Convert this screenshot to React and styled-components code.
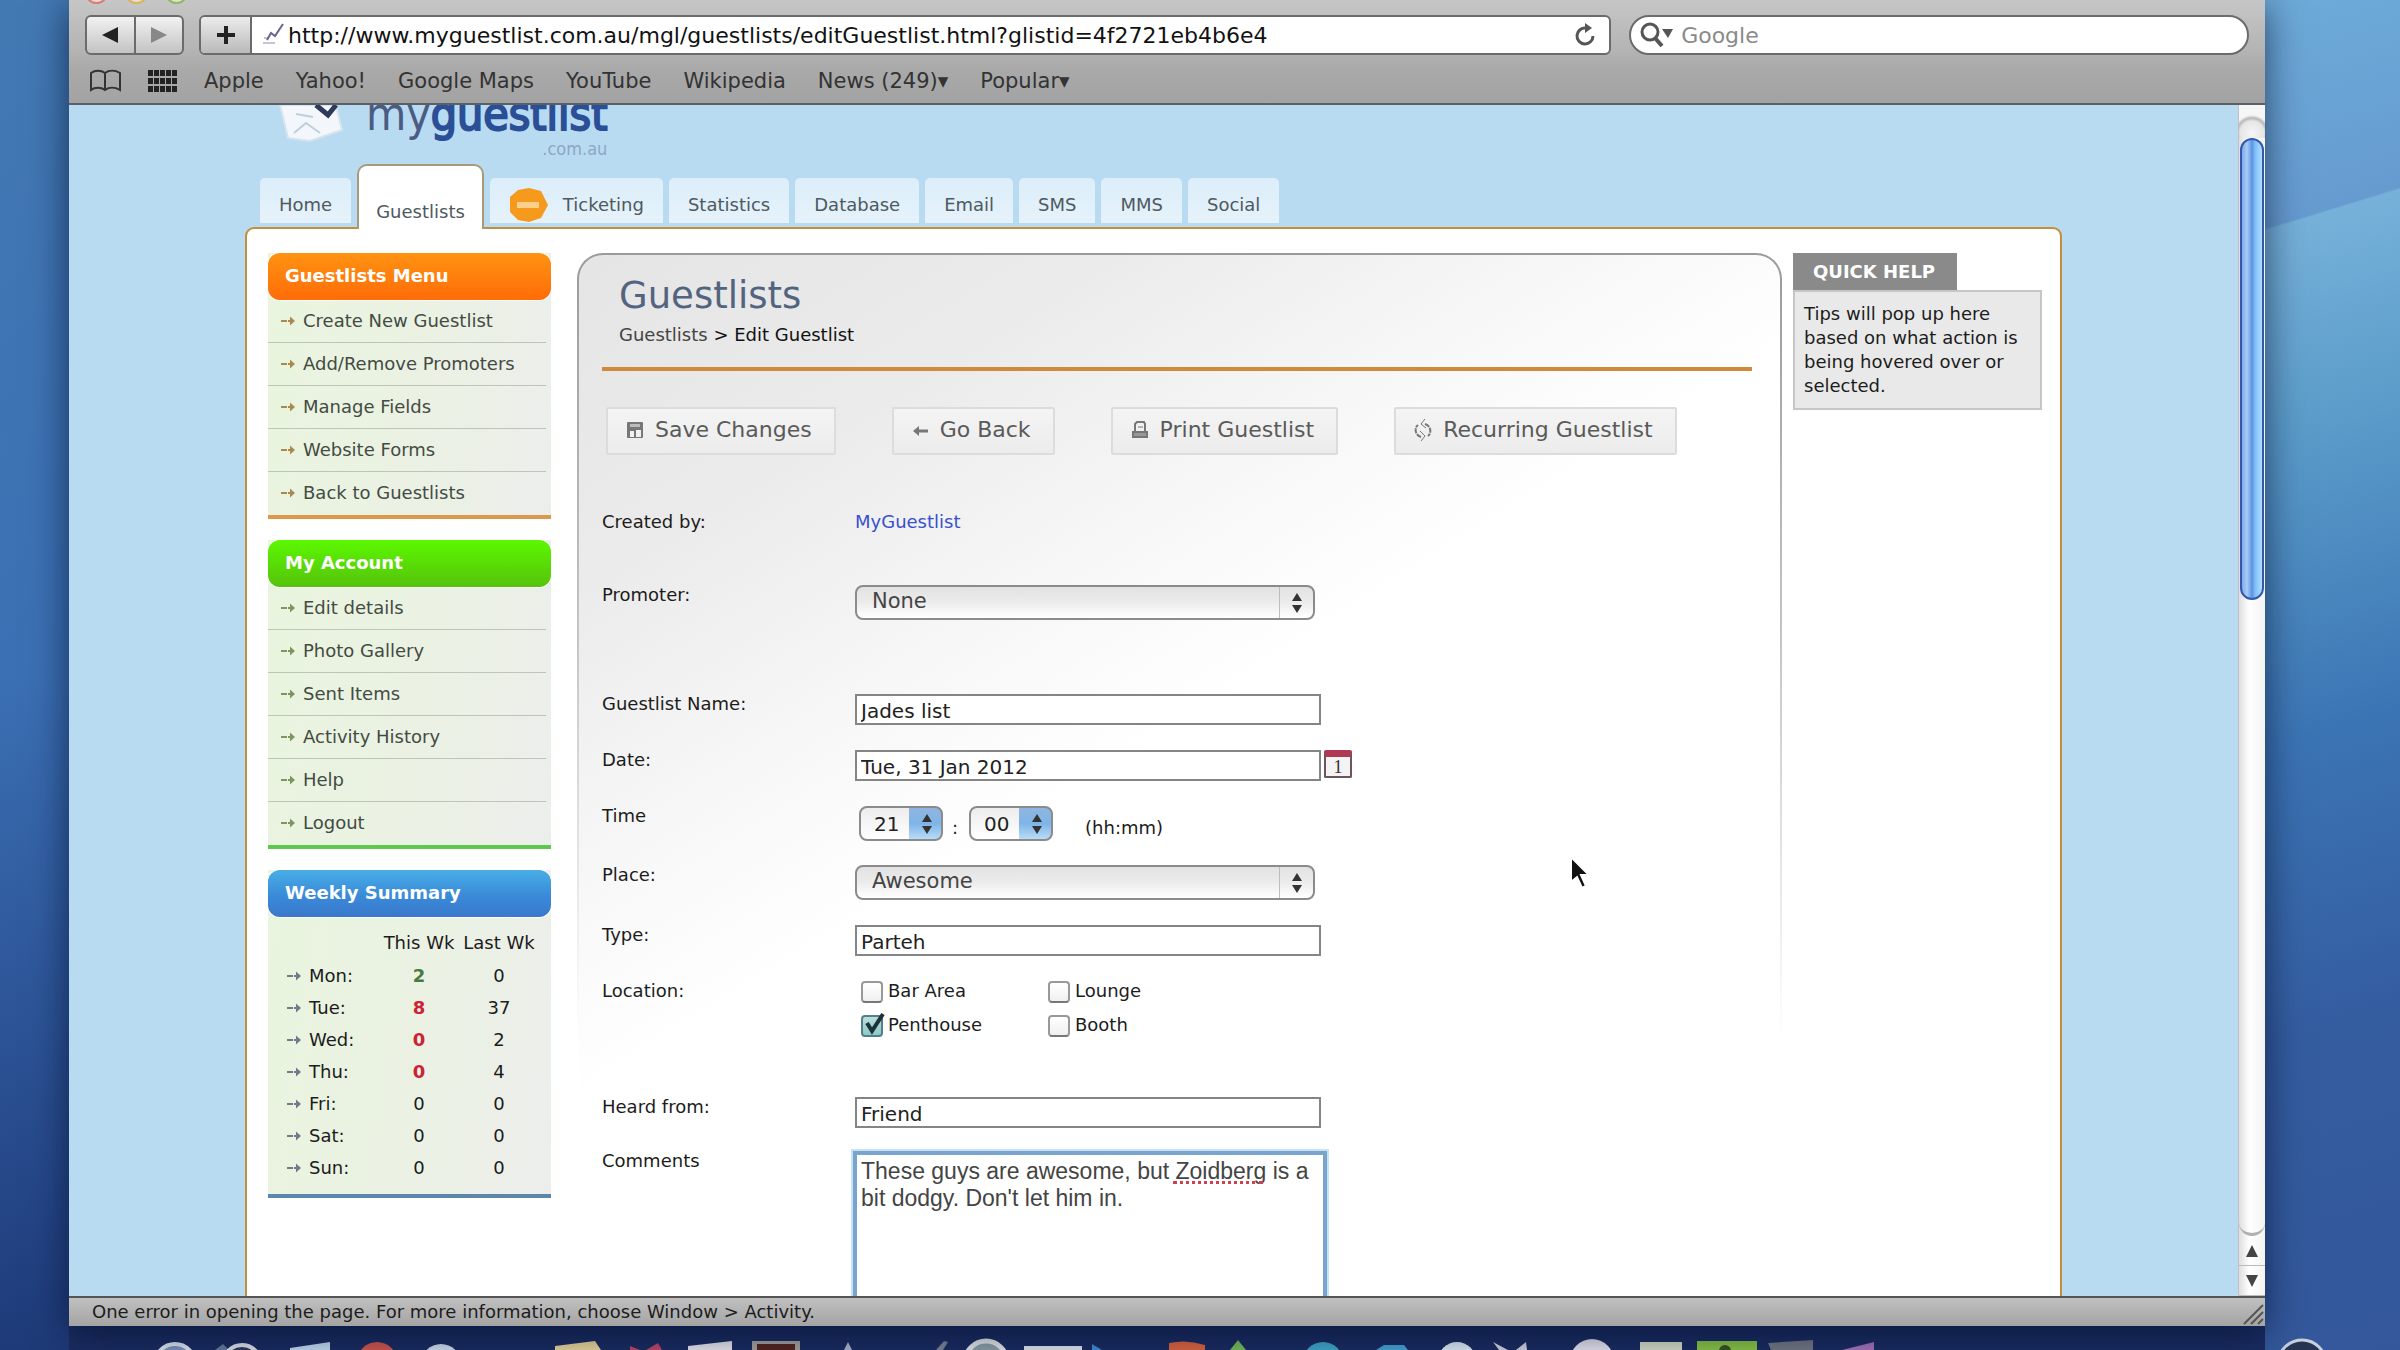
import React from "react";
import styled, { createGlobalStyle } from "styled-components";

const GlobalStyle = createGlobalStyle`
  * {
    box-sizing: border-box;
  }

  body {
    margin: 0;
    overflow: hidden;
    font-family: "DejaVu Sans", Verdana, sans-serif;
    font-size: 18px;
    line-height: 20px;
    color: #1c1c1c;
  }

  button, input, select, textarea {
    font-family: inherit;
    margin: 0;
  }

  a {
    color: inherit;
    text-decoration: none;
  }
`;

const Desktop = styled.div`
  position: relative;
  height: 100vh;
  padding: 0 135px 24px 69px;
  overflow: hidden;
  background:
    linear-gradient(163deg, #6dabd9 0, #669bd0 220px, #76b1d9 222px, #5b9cca 420px, #3b74b4 720px, #345da0 1000px, #33579a 100%)
      right top / 140px 100% no-repeat,
    linear-gradient(180deg, #4379b3 0, #3b70b4 50%, #274a8c 85%, #1e3a78 100%);
`;

const Browser = styled.div`
  display: flex;
  flex-direction: column;
  position: relative;
  z-index: 1;
  height: 100%;
  background: #b8dbf2;
  box-shadow: 0 6px 36px rgba(0, 10, 40, 0.65);
`;

const Chrome = styled.header`
  background: linear-gradient(180deg, #c6c6c6 0, #b4b4b4 50px, #a9a9a9 70px, #a3a3a3 100%);
  border-bottom: 2px solid #5b6067;
`;

const Lights = styled.div`
  display: flex;
  gap: 17px;
  height: 15px;
  padding-left: 16px;
  overflow: hidden;
`;

const Light = styled.span`
  width: 23px;
  height: 23px;
  margin-top: -19px;
  border-radius: 50%;
  border: 2px solid ${({ $color }) => $color};
  background: #e6dcd2;
`;

const Toolbar = styled.div`
  display: flex;
  height: 40px;
  padding: 0 16px;
`;

const NavButtons = styled.div`
  display: flex;
  width: 99px;
  margin-right: 15px;
  border: 2px solid #6b6b6b;
  border-radius: 6px;
  background: linear-gradient(180deg, #f2f2f2, #c3c3c3);
`;

const ToolButton = styled.button`
  flex: 1;
  display: flex;
  align-items: center;
  justify-content: center;
  padding: 0;
  border: 0;
  background: none;

  & + & {
    border-left: 2px solid #6b6b6b;
  }
`;

const AddressBar = styled.div`
  flex: 19;
  display: flex;
  align-items: center;
  margin-right: 18px;
  padding-right: 12px;
  border: 2px solid #6b6b6b;
  border-radius: 6px;
  background: #fff;
  overflow: hidden;
`;

const AddButton = styled.button`
  width: 51px;
  align-self: stretch;
  display: flex;
  align-items: center;
  justify-content: center;
  padding: 0;
  border: 0;
  border-right: 2px solid #6b6b6b;
  background: linear-gradient(180deg, #ececec, #b9b9b9);
`;

const IconButton = styled.button`
  display: flex;
  padding: 0;
  border: 0;
  background: none;
`;

const BarInput = styled.input`
  flex: 1;
  min-width: 0;
  padding: 0;
  border: 0;
  outline: 0;
  background: none;
  font-size: 22px;
  color: #111;

  &::placeholder {
    color: #8a8a8a;
    opacity: 1;
  }
`;

const Favicon = styled.svg`
  margin: 0 2px 0 8px;
`;

const SearchBar = styled.label`
  flex: 8;
  display: flex;
  align-items: center;
  gap: 8px;
  padding: 0 20px 0 8px;
  border: 2px solid #6b6b6b;
  border-radius: 20px;
  background: #fff;
`;

const Bookmarks = styled.nav`
  display: flex;
  align-items: center;
  height: 48px;
  padding: 4px 0 0 20px;
  font-size: 21px;
  line-height: 24px;
  color: #333;
`;

const BookmarkIcon = styled.button`
  display: flex;
  padding: 0;
  margin-right: 26px;
  border: 0;
  background: none;
`;

const Bookmark = styled.a`
  margin-right: 32px;
`;

const Viewport = styled.div`
  flex: 1;
  min-height: 0;
  display: flex;
`;

const Page = styled.div`
  flex: 1;
  overflow: hidden;
  display: flex;
  flex-direction: column;
  align-items: center;
  background: #b8dbf2;
`;

const PageInner = styled.div`
  flex: 1;
  display: flex;
  flex-direction: column;
  width: calc(100% - 352px);
`;

const Brand = styled.div`
  display: flex;
  height: 60px;
  padding-left: 31px;
`;

const BrandMark = styled.svg`
  margin-right: 16px;
`;

const BrandName = styled.div`
  display: flex;
  flex-direction: column;
  align-items: flex-end;
  margin-top: -18px;
  font-family: "DejaVu Sans Condensed", "DejaVu Sans", sans-serif;
  font-size: 46px;
  line-height: 54px;
  color: #4b5b82;

  b {
    font-weight: 400;
    -webkit-text-stroke: 2px #2a4f96;
    color: #2a4f96;
  }

  small {
    font-size: 18px;
    line-height: 16px;
    color: #8ea6c4;
  }
`;

const Tabs = styled.nav`
  display: flex;
  align-items: flex-end;
  gap: 6px;
  height: 62px;
  padding-left: 15px;
`;

const Tab = styled.a`
  display: flex;
  align-items: center;
  justify-content: center;
  gap: 14px;
  height: 45px;
  margin-bottom: 4px;
  padding: 8px 19px 0;
  border-radius: 5px 5px 0 0;
  background: linear-gradient(180deg, #dbeefa, #e6f2fa);
  color: #4f5960;
`;

const ActiveTab = styled(Tab)`
  position: relative;
  z-index: 1;
  height: 65px;
  margin-bottom: -2px;
  padding: 28px 17px 0;
  border: 2px solid #a89a78;
  border-bottom: 0;
  border-radius: 10px 10px 0 0;
  background: #fff;
`;

const Sheet = styled.div`
  flex: 1;
  display: flex;
  align-items: flex-start;
  padding: 24px 18px 0 21px;
  border: 2px solid #c48e3c;
  border-bottom: 0;
  border-radius: 9px 9px 0 0;
  background: #fff;
`;

const Sidebar = styled.aside`
  display: flex;
  flex-direction: column;
  gap: 21px;
  width: 283px;
  margin-right: 26px;
`;

const Box = styled.section`
  border-bottom: 4px solid ${({ $line }) => $line};
  background: linear-gradient(100deg, #e9f5de, #ebf1e4 60%, #eceeec);
`;

const BoxTitle = styled.h2`
  height: 47px;
  margin: 0;
  padding: 0 17px;
  border-radius: 12px;
  background: ${({ $fill }) => $fill};
  box-shadow: 0 0 0 1px #fff;
  font-size: 18px;
  font-weight: 700;
  line-height: 46px;
  color: #fff;
`;

const MenuItem = styled.a`
  display: flex;
  align-items: center;
  gap: 7px;
  height: 43px;
  margin-right: 5px;
  padding-left: 12px;
  border-bottom: 1px solid #bcc6b8;
  color: #434b43;

  &:last-child {
    border-bottom-color: transparent;
  }
`;

const Summary = styled.table`
  width: calc(100% - 12px);
  border-collapse: collapse;
  table-layout: fixed;
  margin: 9px 0 10px;

  th, td {
    height: 32px;
    padding: 0;
    text-align: center;
    white-space: nowrap;
  }

  th {
    font-weight: 400;
  }

  thead th {
    height: 34px;
  }
`;

const DayCell = styled.th`
  width: 111px;

  span {
    display: flex;
    align-items: center;
    gap: 7px;
    padding-left: 18px;
  }
`;

const CountCell = styled.td`
  font-weight: ${({ $tone }) => ($tone ? 700 : 400)};
  color: ${({ $tone }) => $tone || "#1c1c1c"};
`;

const Panel = styled.main`
  flex: 1;
  min-width: 0;
  padding: 20px 28px 0 23px;
  border: 2px solid transparent;
  border-bottom: 0;
  border-radius: 26px 26px 0 0;
  background:
    linear-gradient(148deg, #e5e5e5 0, #ebebeb 18%, #f8f8f8 35%, #fff 46%) padding-box,
    linear-gradient(180deg, #9a9a9a 0, #c4c4c4 380px, #fff 790px) border-box;
`;

const PageHead = styled.div`
  padding: 0 17px 22px;
  border-bottom: 4px solid #d08a3c;
`;

const Title = styled.h1`
  margin: 0 0 8px;
  font-size: 37px;
  font-weight: 400;
  line-height: 42px;
  color: #52647f;
`;

const Crumbs = styled.div`
  color: #111;

  a {
    color: #444;
  }
`;

const Actions = styled.div`
  display: flex;
  gap: 56px;
  padding: 36px 0 57px 4px;
`;

const Action = styled.button`
  display: flex;
  align-items: center;
  gap: 11px;
  height: 48px;
  padding: 0 22px 3px 18px;
  border: 2px solid #dcdcdc;
  border-radius: 2px;
  background: linear-gradient(180deg, #f4f4f4, #ececec);
  font-size: 22px;
  white-space: nowrap;
  color: #5a5a5a;
`;

const Field = styled.div`
  display: grid;
  grid-template-columns: 253px 1fr;
  align-items: start;
  height: ${({ $height }) => $height}px;
`;

const Controls = styled.div`
  display: flex;
  align-items: flex-start;
`;

const Account = styled.a`
  color: #3a50cc;
`;

const TextBox = styled.input`
  width: 466px;
  height: 31px;
  padding: 2px 4px 0;
  border: 2px solid #858585;
  border-radius: 0;
  background: #fff;
  font-size: 20px;
  color: #222;
`;

const SelectWrap = styled.div`
  position: relative;
  width: 460px;

  svg {
    position: absolute;
    top: 7px;
    right: 12px;
    pointer-events: none;
  }
`;

const WideSelect = styled.select`
  appearance: none;
  width: 100%;
  height: 35px;
  padding: 0 0 3px 15px;
  border: 2px solid #8b8b8b;
  border-radius: 8px;
  background:
    linear-gradient(#bdbdbd, #bdbdbd) right 33px top / 1px 100% no-repeat,
    linear-gradient(180deg, #e2e2e2, #ececec 50%, #fff);
  font-size: 21px;
  color: #444;
`;

const TimeWrap = styled(SelectWrap)`
  width: 84px;
  margin-left: ${({ $gap }) => $gap}px;

  svg {
    right: 10px;
  }
`;

const TimeSelect = styled(WideSelect)`
  padding: 0 0 0 13px;
  background:
    linear-gradient(180deg, #8fb6e0, #7fb4e8 50%, #b8dcf8) right top / 32px 100% no-repeat,
    linear-gradient(180deg, #ededed, #fff);
  font-size: 20px;
  color: #222;
`;

const Colon = styled.span`
  padding: 12px 0 0 9px;
`;

const Hint = styled.span`
  padding: 12px 0 0 32px;
`;

const DateButton = styled.button`
  width: 28px;
  height: 28px;
  margin-left: 3px;
  padding: 0;
  border: 2px solid #6d5560;
  border-top: 7px solid #b03a54;
  border-radius: 2px;
  background: #f4f4f4;
  font-family: "Liberation Serif", serif;
  font-size: 18px;
  line-height: 18px;
  color: #333;
`;

const Choices = styled.div`
  display: grid;
  grid-template-columns: 187px 187px;
  row-gap: 14px;
  padding-left: 6px;
`;

const Choice = styled.label`
  position: relative;
  display: flex;
  gap: 5px;
  height: 20px;

  svg {
    position: absolute;
    left: 3px;
    top: -3px;
    pointer-events: none;
  }
`;

const Check = styled.input`
  appearance: none;
  width: 22px;
  height: 22px;
  border: 2px solid #999;
  border-bottom-color: #777;
  border-radius: 4px;
  background: linear-gradient(180deg, #fff, #f0f0f0);

  &:checked {
    border-color: #557f86;
    background: linear-gradient(180deg, #b9dede, #8ccaca);
  }
`;

const CommentWrap = styled.div`
  position: relative;
  margin-left: -2px;
`;

const Comment = styled.textarea`
  display: block;
  width: 474px;
  height: 200px;
  padding: 3px 4px;
  border: 4px solid #78a4cd;
  outline: 2px solid #c6e2f6;
  resize: none;
  font-family: "Liberation Sans", Arial, sans-serif;
  font-size: 23px;
  line-height: 27px;
  color: #444;
`;

const SpellMark = styled.span`
  position: absolute;
  left: 320px;
  top: 30px;
  width: 90px;
  border-bottom: 3px dotted #d04050;
`;

const Help = styled.aside`
  width: 249px;
  margin-left: 11px;
`;

const HelpTitle = styled.h2`
  display: inline-block;
  height: 37px;
  margin: 0;
  padding: 0 22px 0 20px;
  background: #8a8a8a;
  font-size: 18px;
  line-height: 38px;
  vertical-align: top;
  color: #fff;
`;

const HelpText = styled.p`
  margin: 0;
  padding: 10px 9px;
  border: 2px solid #c6c6c6;
  background: #e9e9e9;
  line-height: 24px;
`;

const Scrollbar = styled.div`
  display: flex;
  flex-direction: column;
  width: 27px;
  border-left: 1px solid #c0c0c0;
  background: linear-gradient(90deg, #dedede, #fff 40%, #f4f4f4);
`;

const ScrollCap = styled.div`
  height: 33px;
  background: radial-gradient(circle at 50% 85%, #f6f6f6 0, #e6e6e6 12px, #b8b8b8 15px, #f6f6f6 18px);
`;

const Thumb = styled.div`
  height: 462px;
  margin: 0 1px;
  border: 2px solid #3458b0;
  border-radius: 12px;
  background: linear-gradient(90deg, #7fa9ea 0, #a9cdf8 25%, #5b93e0 50%, #7ebcf8 65%, #b0e0ff 100%);
`;

const Track = styled.div`
  flex: 1;
  border-bottom: 3px solid #b0b0b0;
  border-radius: 0 0 13px 13px;
`;

const ScrollButton = styled.button`
  display: flex;
  align-items: center;
  justify-content: center;
  height: 30px;
  padding: 0;
  border: 0;
  border-bottom: 1px solid #bbb;
  background: none;
`;

const StatusBar = styled.footer`
  display: flex;
  justify-content: space-between;
  height: 30px;
  padding-left: 23px;
  border-top: 2px solid #555;
  background: linear-gradient(180deg, #c0c0c0, #a4a4a4);
  line-height: 28px;
  color: #1c1c1c;
`;

const Dock = styled.svg`
  position: absolute;
  left: 0;
  bottom: 0;
  width: 100%;
  height: 24px;
`;

const Pointer = styled.svg`
  position: absolute;
  z-index: 2;
  left: 1570px;
  top: 856px;
`;

const guestMenu = [
  "Create New Guestlist",
  "Add/Remove Promoters",
  "Manage Fields",
  "Website Forms",
  "Back to Guestlists",
];

const accountMenu = [
  "Edit details",
  "Photo Gallery",
  "Sent Items",
  "Activity History",
  "Help",
  "Logout",
];

const week = [
  { day: "Mon:", now: 2, last: 0, tone: "#4a7a42" },
  { day: "Tue:", now: 8, last: 37, tone: "#cc2233" },
  { day: "Wed:", now: 0, last: 2, tone: "#cc2233" },
  { day: "Thu:", now: 0, last: 4, tone: "#cc2233" },
  { day: "Fri:", now: 0, last: 0 },
  { day: "Sat:", now: 0, last: 0 },
  { day: "Sun:", now: 0, last: 0 },
];

const locations = [
  { name: "Bar Area" },
  { name: "Lounge" },
  { name: "Penthouse", checked: true },
  { name: "Booth" },
];

const Arrow = ({ color = "#7d9660" }) => (
  <svg width="16" height="14" viewBox="0 0 16 14" fill="none">
    <path d="M1 7h6M8 7h4" stroke={color} strokeWidth="2" />
    <path d="M10 2.500l5 4.500-5 4.500z" fill={color} />
  </svg>
);

const UpDown = () => (
  <svg width="12" height="22" viewBox="0 0 12 22" fill="#333">
    <path d="M6 1l5 8H1zM6 21l5-8H1z" />
  </svg>
);

const SaveIcon = () => (
  <svg width="18" height="18" viewBox="0 0 18 18">
    <rect x="1" y="1" width="16" height="16" rx="1" fill="#777" />
    <path d="M4 3h10v3H4z" fill="#bbb" />
    <path d="M4 10h4v6H4zM10 9h5v7h-5z" fill="#f2f2f2" />
  </svg>
);

const BackIcon = () => (
  <svg width="17" height="16" viewBox="0 0 17 16" fill="none" stroke="#777" strokeWidth="3">
    <path d="M16 9H4" />
    <path d="M7 4v10L1 9z" fill="#777" stroke="none" />
  </svg>
);

const PrintIcon = () => (
  <svg width="18" height="18" viewBox="0 0 18 18" fill="none" stroke="#777" strokeWidth="2">
    <path d="M4 10V3l2-2h7l1 2v7" />
    <path d="M7 6h5" strokeWidth="1" />
    <path d="M2 11h14v5H2z" fill="#999" />
  </svg>
);

const RecurIcon = () => (
  <svg width="18" height="24" viewBox="0 0 18 24" fill="none" stroke="#777" strokeWidth="2">
    <path d="M7 19C1 17 0 10 4 7M11 6c6 2 7 9 3 12" strokeDasharray="5 1" />
    <path d="M11 1L7 6l5 4M6 13l5 5-4 5" strokeWidth="1" />
  </svg>
);

const BookIcon = () => (
  <svg width="33" height="24" viewBox="0 0 33 24" fill="none" stroke="#333" strokeWidth="2">
    <path d="M16 4C12 1 6 1 2 4v17c4-3 10-3 14 0 4-3 10-3 15 0V4c-5-3-11-3-15 0zM16 4v17" />
  </svg>
);

const GridIcon = () => (
  <svg width="30" height="22" viewBox="0 0 30 22" fill="#222">
    {[0, 8, 16].map((y) =>
      [0, 6, 12, 18, 24].map((x) => <rect key={`${x}-${y}`} x={x} y={y} width="5" height="6" />)
    )}
  </svg>
);

const SideMenu = ({ title, items, line, fill, arrow }) => (
  <Box $line={line}>
    <BoxTitle $fill={fill}>{title}</BoxTitle>
    <nav>
      {items.map((item) => (
        <MenuItem key={item} href="#">
          <Arrow color={arrow} />
          {item}
        </MenuItem>
      ))}
    </nav>
  </Box>
);

const WeeklySummary = () => (
  <Box $line="#5c87ac">
    <BoxTitle $fill="linear-gradient(180deg, #48aee6, #3a8ad8 55%, #3a78cc)">Weekly Summary</BoxTitle>
    <Summary>
      <thead>
        <tr>
          <DayCell />
          <th>This Wk</th>
          <th>Last Wk</th>
        </tr>
      </thead>
      <tbody>
        {week.map(({ day, now, last, tone }) => (
          <tr key={day}>
            <DayCell scope="row">
              <span>
                <Arrow color="#6f7a8c" />
                {day}
              </span>
            </DayCell>
            <CountCell $tone={tone}>{now}</CountCell>
            <CountCell>{last}</CountCell>
          </tr>
        ))}
      </tbody>
    </Summary>
  </Box>
);

const GuestlistForm = () => (
  <form>
    <Field $height={73}>
      <span>Created by:</span>
      <Account href="#">MyGuestlist</Account>
    </Field>
    <Field $height={109}>
      <label htmlFor="promoter">Promoter:</label>
      <SelectWrap>
        <WideSelect id="promoter">
          <option>None</option>
        </WideSelect>
        <UpDown />
      </SelectWrap>
    </Field>
    <Field $height={56}>
      <label htmlFor="name">Guestlist Name:</label>
      <TextBox id="name" defaultValue="Jades list" />
    </Field>
    <Field $height={56}>
      <label htmlFor="date">Date:</label>
      <Controls>
        <TextBox id="date" defaultValue="Tue, 31 Jan 2012" />
        <DateButton type="button" aria-label="Pick a date">1</DateButton>
      </Controls>
    </Field>
    <Field $height={59}>
      <label htmlFor="hours">Time</label>
      <Controls>
        <TimeWrap $gap={4}>
          <TimeSelect id="hours">
            <option>21</option>
          </TimeSelect>
          <UpDown />
        </TimeWrap>
        <Colon>:</Colon>
        <TimeWrap $gap={11}>
          <TimeSelect aria-label="Minutes">
            <option>00</option>
          </TimeSelect>
          <UpDown />
        </TimeWrap>
        <Hint>(hh:mm)</Hint>
      </Controls>
    </Field>
    <Field $height={60}>
      <label htmlFor="place">Place:</label>
      <SelectWrap>
        <WideSelect id="place">
          <option>Awesome</option>
        </WideSelect>
        <UpDown />
      </SelectWrap>
    </Field>
    <Field $height={56}>
      <label htmlFor="type">Type:</label>
      <TextBox id="type" defaultValue="Parteh" />
    </Field>
    <Field $height={116}>
      <span>Location:</span>
      <Choices>
        {locations.map(({ name, checked }) => (
          <Choice key={name}>
            <Check type="checkbox" defaultChecked={checked} />
            {checked && (
              <svg width="22" height="24" viewBox="0 0 22 24" fill="none" stroke="#1d3338" strokeWidth="4">
                <path d="M3 11l5 8L19 2" />
              </svg>
            )}
            {name}
          </Choice>
        ))}
      </Choices>
    </Field>
    <Field $height={54}>
      <label htmlFor="heard">Heard from:</label>
      <TextBox id="heard" defaultValue="Friend" />
    </Field>
    <Field $height={200}>
      <label htmlFor="comments">Comments</label>
      <CommentWrap>
        <Comment
          id="comments"
          spellCheck={false}
          defaultValue="These guys are awesome, but Zoidberg is a bit dodgy. Don't let him in."
        />
        <SpellMark />
      </CommentWrap>
    </Field>
  </form>
);

const BrowserChrome = () => (
  <Chrome>
    <Lights>
      <Light $color="#dc7b76" />
      <Light $color="#d9b45c" />
      <Light $color="#8cbb62" />
    </Lights>
    <Toolbar>
      <NavButtons>
        <ToolButton aria-label="Back">
          <svg width="18" height="18" viewBox="0 0 18 18"><path d="M17 1v16L1 9z" fill="#222" /></svg>
        </ToolButton>
        <ToolButton aria-label="Forward">
          <svg width="18" height="18" viewBox="0 0 18 18"><path d="M1 1v16L17 9z" fill="#888" /></svg>
        </ToolButton>
      </NavButtons>
      <AddressBar>
        <AddButton aria-label="Add bookmark">
          <svg width="20" height="20" viewBox="0 0 20 20"><path d="M10 1v18M1 10h18" stroke="#222" strokeWidth="4" /></svg>
        </AddButton>
        <Favicon width="26" height="24" viewBox="0 0 26 24" fill="none">
          <path d="M3 20h12M4 15h5" stroke="#c8c4d8" strokeWidth="2" />
          <path d="M7 17l4-7 4 3 8-12" stroke="#66668f" strokeWidth="2" />
        </Favicon>
        <BarInput
          aria-label="Address"
          defaultValue="http://www.myguestlist.com.au/mgl/guestlists/editGuestlist.html?glistid=4f2721eb4b6e4"
        />
        <IconButton aria-label="Reload">
          <svg width="22" height="24" viewBox="0 0 22 24" fill="none" stroke="#555" strokeWidth="3">
            <path d="M18 13a8 8 0 1 1-7-8" />
            <path d="M10 0l7 5-7 5z" fill="#555" stroke="none" />
          </svg>
        </IconButton>
      </AddressBar>
      <SearchBar>
        <svg width="34" height="26" viewBox="0 0 34 26" fill="none" stroke="#555" strokeWidth="3">
          <circle cx="11" cy="10" r="8" />
          <path d="M16 16l7 8" strokeWidth="4" />
          <path d="M23 7h11l-5 9z" fill="#555" stroke="none" />
        </svg>
        <BarInput aria-label="Search" placeholder="Google" />
      </SearchBar>
    </Toolbar>
    <Bookmarks>
      <BookmarkIcon aria-label="Bookmarks"><BookIcon /></BookmarkIcon>
      <BookmarkIcon aria-label="Top sites"><GridIcon /></BookmarkIcon>
      {["Apple", "Yahoo!", "Google Maps", "YouTube", "Wikipedia", "News (249)▾", "Popular▾"].map((name) => (
        <Bookmark key={name} href="#">{name}</Bookmark>
      ))}
    </Bookmarks>
  </Chrome>
);

const DockIcons = () => (
  <Dock viewBox="0 0 2400 24" preserveAspectRatio="none">
    <rect x="69" width="2196" height="24" fill="#1a2c60" />
    <path d="M215 24l8-6 6 6" fill="#647ba0" />
    <circle cx="175" cy="38" r="20" fill="#7c96bd" stroke="#dfe8f2" strokeWidth="4" />
    <circle cx="242" cy="38" r="19" fill="#2c3c58" stroke="#dfe4ea" strokeWidth="4" />
    <path d="M290 22l40-6v8h-40z" fill="#c3ddf2" />
    <circle cx="377" cy="36" r="20" fill="#d2574e" />
    <circle cx="441" cy="38" r="20" fill="#cfdfef" />
    <path d="M555 20l40-5 6 9h-46z" fill="#e9d79a" />
    <path d="M630 20l10 4h-10zM646 24l12-7 4 7z" fill="#c0486a" />
    <path d="M688 20l44-5v9h-44z" fill="#e7e7ee" />
    <path d="M752 15h48v9h-48z" fill="#a9a3a0" />
    <path d="M757 18h38v6h-38z" fill="#55261e" />
    <path d="M844 24l4-8 4 8z" fill="#a9b9ce" />
    <path d="M936 24l8-9 4 1-5 8z" fill="#7b8696" />
    <circle cx="986" cy="36" r="21" fill="#8ea0a8" stroke="#e4e9ea" strokeWidth="5" />
    <path d="M1024 20h58v4h-58z" fill="#e2e8ee" />
    <path d="M1092 18l10 6h-10z" fill="#3f8fdc" />
    <path d="M1169 17q18-4 36 2v5h-36z" fill="#dd6540" />
    <path d="M1230 24l8-10 8 10z" fill="#75c05a" />
    <circle cx="1323" cy="36" r="20" fill="#41a9c8" />
    <path d="M1376 24l8-5h20l4 5z" fill="#44a5d5" />
    <circle cx="1457" cy="35" r="19" fill="#dcecf4" />
    <path d="M1493 16l15 8h-9zM1526 16l-10 8h11z" fill="#d2d5df" />
    <circle cx="1592" cy="35" r="22" fill="#e6e4f0" />
    <path d="M1640 16h42v8h-42z" fill="#d7dec9" />
    <path d="M1697 15h60v9h-60z" fill="#8ac645" />
    <circle cx="1725" cy="25" r="6" fill="#345622" />
    <path d="M1768 17l45-3v10h-42z" fill="#747985" />
    <path d="M1842 24l32-8v8z" fill="#a575bd" />
    <circle cx="2302" cy="38" r="24" fill="#273553" stroke="#c6d0de" strokeWidth="3" />
  </Dock>
);

const App = () => {
  return (
    <Desktop>
      <GlobalStyle />
      <Browser>
        <BrowserChrome />
        <Viewport>
          <Page>
            <PageInner>
              <Brand>
                <BrandMark width="74" height="44" viewBox="0 0 74 44">
                  <path d="M4 0h56l6 25-32 11-22-3z" fill="#f3f7fb" stroke="#d5e3ee" strokeWidth="2" />
                  <path d="M20 9l17 3M18 28l12-10 14 10" fill="none" stroke="#c0cedb" strokeWidth="2" />
                  <path d="M40 0l12 10 8-10" fill="none" stroke="#2f3a5a" strokeWidth="5" />
                </BrandMark>
                <BrandName>
                  <span>my<b>guestlist</b></span>
                  <small>.com.au</small>
                </BrandName>
              </Brand>
              <Tabs>
                <Tab href="#">Home</Tab>
                <ActiveTab href="#">Guestlists</ActiveTab>
                <Tab href="#">
                  <svg width="40" height="34" viewBox="0 0 40 34">
                    <path d="M9 2l11-2 12 3 7 14-7 13-12 4-11-2-8-8V9z" fill="#f59a1c" />
                    <path d="M8 17h22" stroke="#fbd08a" strokeWidth="6" />
                  </svg>
                  Ticketing
                </Tab>
                <Tab href="#">Statistics</Tab>
                <Tab href="#">Database</Tab>
                <Tab href="#">Email</Tab>
                <Tab href="#">SMS</Tab>
                <Tab href="#">MMS</Tab>
                <Tab href="#">Social</Tab>
              </Tabs>
              <Sheet>
                <Sidebar>
                  <SideMenu
                    title="Guestlists Menu"
                    items={guestMenu}
                    line="#dd984a"
                    fill="linear-gradient(180deg, #ff9312, #ff6c08)"
                    arrow="#a98a4c"
                  />
                  <SideMenu
                    title="My Account"
                    items={accountMenu}
                    line="#5cc84c"
                    fill="linear-gradient(180deg, #5cf800, #56c20c)"
                  />
                  <WeeklySummary />
                </Sidebar>
                <Panel>
                  <PageHead>
                    <Title>Guestlists</Title>
                    <Crumbs>
                      <a href="#">Guestlists</a> &gt; Edit Guestlist
                    </Crumbs>
                  </PageHead>
                  <Actions>
                    <Action><SaveIcon />Save Changes</Action>
                    <Action><BackIcon />Go Back</Action>
                    <Action><PrintIcon />Print Guestlist</Action>
                    <Action><RecurIcon />Recurring Guestlist</Action>
                  </Actions>
                  <GuestlistForm />
                </Panel>
                <Help>
                  <HelpTitle>QUICK HELP</HelpTitle>
                  <HelpText>
                    Tips will pop up here based on what action is being hovered over or selected.
                  </HelpText>
                </Help>
              </Sheet>
            </PageInner>
          </Page>
          <Scrollbar>
            <ScrollCap />
            <Thumb />
            <Track />
            <ScrollButton aria-label="Scroll up">
              <svg width="14" height="12" viewBox="0 0 14 12"><path d="M7 0l6 12H1z" fill="#444" /></svg>
            </ScrollButton>
            <ScrollButton aria-label="Scroll down">
              <svg width="14" height="12" viewBox="0 0 14 12"><path d="M7 12l6-12H1z" fill="#444" /></svg>
            </ScrollButton>
          </Scrollbar>
        </Viewport>
        <StatusBar>
          One error in opening the page. For more information, choose Window &gt; Activity.
          <svg width="24" height="28" viewBox="0 0 24 28" stroke="#555" strokeWidth="2">
            <path d="M3 26L22 7M10 26l12-12M17 26l5-5" />
          </svg>
        </StatusBar>
      </Browser>
      <DockIcons />
      <Pointer width="20" height="34" viewBox="0 0 20 34">
        <path d="M1 1v25l6-5 5 11 4-2-5-11h8z" fill="#111" stroke="#fff" strokeWidth="2" />
      </Pointer>
    </Desktop>
  );
};

export default App;
